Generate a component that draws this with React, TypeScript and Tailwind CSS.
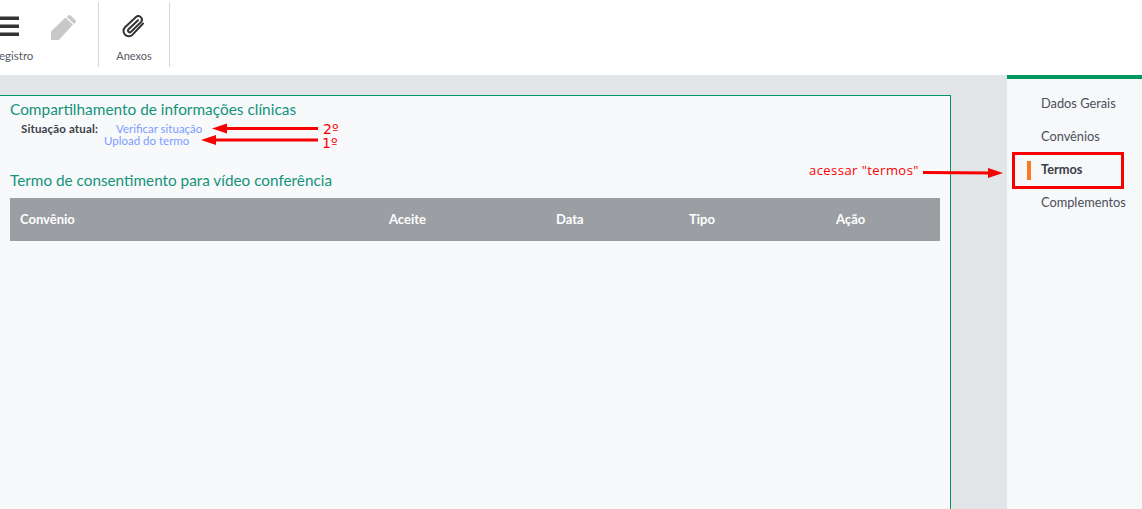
const FONT = "font-['Lato','Noto_Sans',sans-serif]";

const NAV_ITEMS = ["Dados Gerais", "Convênios", "Termos", "Complementos"];
const COLUMNS = [
  { label: "Convênio", width: "w-[369px]" },
  { label: "Aceite", width: "w-[167px]" },
  { label: "Data", width: "w-[133px]" },
  { label: "Tipo", width: "w-[147px]" },
  { label: "Ação", width: "w-[94px]" },
];

// Red annotations drawn on top of the screenshot
function Arrow({ x1, y1, x2, y2 }: { x1: number; y1: number; x2: number; y2: number }) {
  const dir = x2 > x1 ? -1 : 1;
  return (
    <g fill="#f80000" stroke="none">
      <line x1={x1} y1={y1} x2={x2 + dir * 10} y2={y2} stroke="#f80000" strokeWidth="3" />
      <polygon points={`${x2},${y2} ${x2 + dir * 15},${y2 - 5} ${x2 + dir * 15},${y2 + 5}`} />
    </g>
  );
}

function Annotations() {
  return (
    <>
      <svg className="absolute inset-0 w-full h-full pointer-events-none" viewBox="0 0 1142 509">
        <Arrow x1={318} y1={128.5} x2={212} y2={128.5} />
        <Arrow x1={318} y1={140} x2={201} y2={140} />
        <Arrow x1={923} y1={172.5} x2={1003} y2={173} />
      </svg>
      <span className="absolute left-[323px] top-[122px] text-[14px] leading-[14px] text-[#f80000] font-['DejaVu_Sans',sans-serif]">2º</span>
      <span className="absolute left-[322px] top-[136px] text-[14px] leading-[14px] text-[#f80000] font-['DejaVu_Sans',sans-serif]">1º</span>
      <span className="absolute left-[809px] top-[162px] text-[13px] leading-[17px] tracking-[0.45px] text-[#f80000] font-['Open_Sans',sans-serif]">acessar "termos"</span>
    </>
  );
}

function MenuBars() {
  return (
    <svg className="absolute left-0 top-[14px] w-[19px] h-[21px]" viewBox="0 0 19 21" fill="#333333">
      <rect width="19" height="3.5" y="0.5" />
      <rect width="19" height="3.5" y="8.5" />
      <rect width="19" height="3.5" y="16.5" />
    </svg>
  );
}

function PencilSolid() {
  return (
    <svg className="absolute left-[51px] top-[13px] w-[25px] h-[25px]" viewBox="0 0 25 25" fill="#c8c8c8">
      <polygon points="0,25 0,16.5 14.5,2.5 22,9.5 8,25" />
      <polygon points="17,0.5 19,0 25,5.5 24.5,7.5 23,9 16,2" />
    </svg>
  );
}

function Toolbar() {
  return (
    <div className="h-[75px] bg-white flex items-start pt-[2px] overflow-hidden">
      <div className="w-[99px] h-[65px] border-r border-[#d6d6d6] relative">
        <MenuBars />
        <PencilSolid />
        <span className="absolute left-[-1px] top-[46px] text-[11.5px] leading-[15px] text-[#555b66] whitespace-nowrap">
          egistro
        </span>
      </div>
      <div className="w-[71px] h-[65px] border-r border-[#d6d6d6] flex flex-col items-center">
        <svg className="w-[24px] h-[24px] mt-[13px]" viewBox="0 0 24 24" fill="none" stroke="#333333" strokeWidth="2" strokeLinecap="round" strokeLinejoin="round">
          <path d="M21 8.5 10.6 19.6a5.3 5.3 0 0 1-7.6-7.4L14 1.9a3.6 3.6 0 0 1 5.1 5L8.8 17a1.8 1.8 0 0 1-2.5-2.5L16 5.2" />
        </svg>
        <span className="text-[11px] leading-[15px] mt-[9px] text-[#555b66]">Anexos</span>
      </div>
    </div>
  );
}

function Sidebar() {
  return (
    <aside className="w-[135px] shrink-0 bg-[#f7f8fa] border-t-[4px] border-[#00975f] pt-[8px] pl-[5px]">
      {NAV_ITEMS.map((item) => {
        const active = item === "Termos";
        return (
          <div key={item} className="h-[33px] flex items-center relative">
            <div className={active ? "w-[112px] h-[37px] border-[3px] border-[#f80000] flex items-center absolute left-0 top-[-1px]" : "hidden"}>
              <div className="w-[4px] h-[19px] bg-[#f97a20] ml-[12px]" />
            </div>
            <span className={`ml-[29px] relative text-[12.8px] ${active ? "font-bold text-[#3c4048]" : "text-[#4a4f58]"}`}>
              {item}
            </span>
          </div>
        );
      })}
    </aside>
  );
}

export default function App() {
  return (
    <div className={`relative w-[1142px] h-[509px] overflow-hidden flex flex-col bg-[#e1e5e8] ${FONT}`}>
      <Toolbar />
      <div className="flex-1 flex min-h-0">
        <div className="flex-1 pt-[20px] pr-[56px]">
          <main className="h-[500px] bg-[#f8f9fb] border-t border-r border-[#00975f] pl-[10px] pr-[10px]">
            <h2 className="text-[15.4px] leading-[20px] mt-[3px] text-[#14937a]">Compartilhamento de informações clínicas</h2>
            <div className="flex text-[11.5px] leading-[12px] mt-[4px]">
              <span className="ml-[11px] w-[95px] font-bold text-[#3c4048] tracking-[0.15px]">Situação atual:</span>
              <span className="text-[#7b9cff]">Verificar situação</span>
            </div>
            <div className="ml-[94px] text-[11.5px] leading-[12px] text-[#7b9cff]">Upload do termo</div>
            <h2 className="text-[15.3px] leading-[20px] mt-[23px] text-[#14937a]">Termo de consentimento para vídeo conferência</h2>
            <div className="h-[43px] mt-[8px] bg-[#9b9ea3] flex items-center pl-[10px] text-[13px] font-bold text-white">
              {COLUMNS.map((col) => (
                <span key={col.label} className={col.width}>{col.label}</span>
              ))}
            </div>
          </main>
        </div>
        <Sidebar />
      </div>
      <Annotations />
    </div>
  );
}
